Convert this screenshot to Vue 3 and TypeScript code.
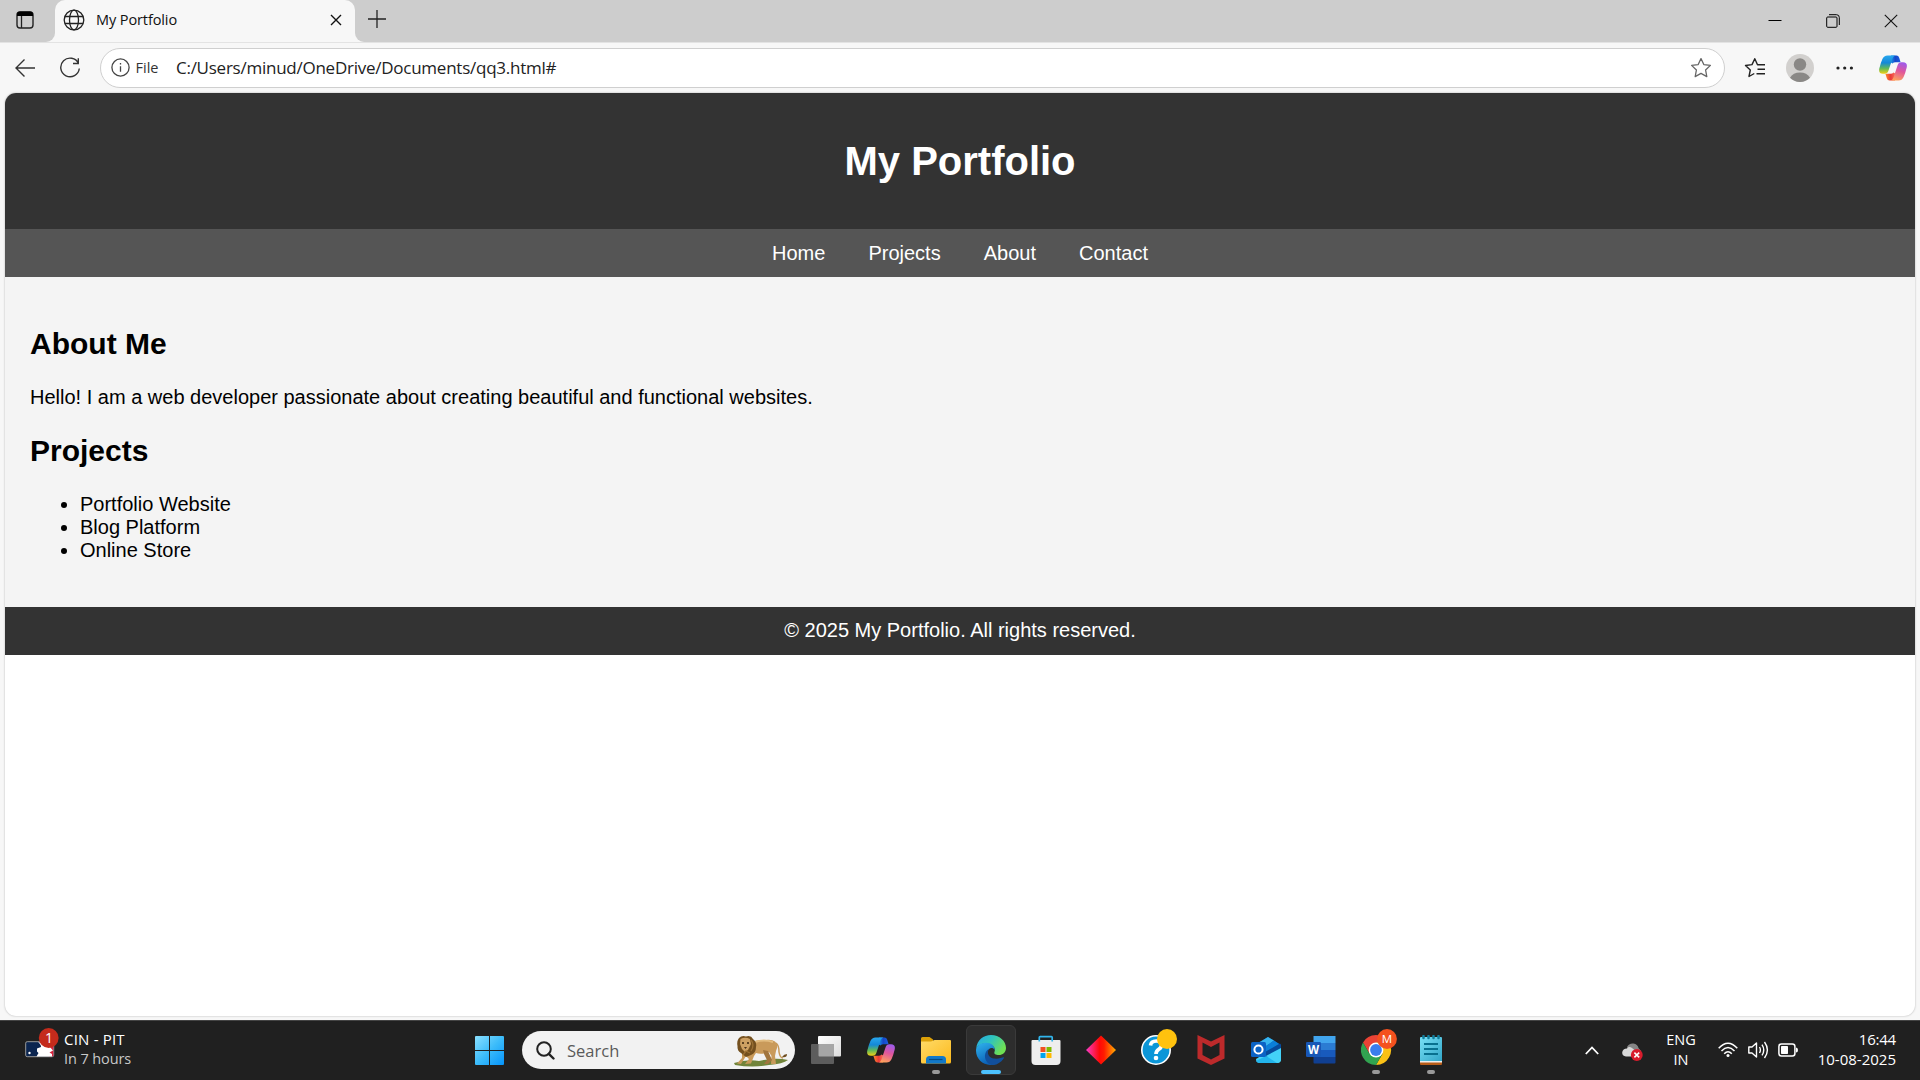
<script setup lang="ts">
import { ref } from 'vue'

interface TaskApp {
  id: string
  label: string
  running?: boolean
  active?: boolean
}

const address = ref('C:/Users/minud/OneDrive/Documents/qq3.html#')
const links: string[] = ['Home', 'Projects', 'About', 'Contact']
const projects: string[] = ['Portfolio Website', 'Blog Platform', 'Online Store']
const apps: TaskApp[] = [
  { id: 'taskview', label: 'Task view' },
  { id: 'copilot', label: 'Copilot' },
  { id: 'explorer', label: 'File Explorer', running: true },
  { id: 'edge', label: 'Edge', active: true },
  { id: 'store', label: 'Store' },
  { id: 'diamond', label: 'Diamond' },
  { id: 'help', label: 'Help' },
  { id: 'mcafee', label: 'McAfee' },
  { id: 'outlook', label: 'Outlook' },
  { id: 'word', label: 'Word' },
  { id: 'chrome', label: 'Chrome', running: true },
  { id: 'notepad', label: 'Notepad', running: true },
]
</script>

<template>
  <div class="screen">
    <svg class="defs" width="0" height="0" aria-hidden="true">
      <defs>
        <linearGradient id="cpA" x1="0" y1="0" x2="0" y2="1">
          <stop offset="0" stop-color="#28a8ee" /><stop offset=".4" stop-color="#1488d8" />
          <stop offset=".7" stop-color="#5fb95a" /><stop offset="1" stop-color="#f3d013" />
        </linearGradient>
        <linearGradient id="cpB" x1=".6" y1="0" x2=".3" y2="1">
          <stop offset="0" stop-color="#a05be8" /><stop offset=".45" stop-color="#e0569c" />
          <stop offset="1" stop-color="#ffa45a" />
        </linearGradient>
        <linearGradient id="cpC" x1="0" y1="0" x2="1" y2="0">
          <stop offset="0" stop-color="#1aa0ee" /><stop offset=".5" stop-color="#1647c8" /><stop offset="1" stop-color="#1d5fe0" />
        </linearGradient>
        <linearGradient id="cpD" x1="0" y1="0" x2="1" y2="0">
          <stop offset="0" stop-color="#ff8a2a" /><stop offset=".5" stop-color="#e93a3a" /><stop offset="1" stop-color="#ff7a5e" />
        </linearGradient>
        <symbol id="copilot" viewBox="0 0 28 26">
          <path d="M12 .5H17.500Q19.500.5 20.200 2.700L21.600 7.200H16.500Q14.500 7.200 13.500 8.500L11 7Z" fill="url(#cpC)" />
          <path d="M16 25.500H10.500Q8.500 25.500 7.800 23.300L6.400 18.800H11.500Q13.500 18.800 14.500 17.500L17 19Z" fill="url(#cpD)" />
          <path d="M8.500.5H16.500Q14.300 1 13.500 3.500L9.500 15.500Q8.500 18.800 5.600 18.800H4Q-.8 18.800.3 13.500Q1.600 8 3.400 4Q5 .5 8.500.5Z" fill="url(#cpA)" />
          <path d="M19.500 25.500H11.500Q13.700 25 14.500 22.500L18.500 10.500Q19.500 7.200 22.400 7.200H24Q28.800 7.200 27.700 12.500Q26.400 18 24.600 22Q23 25.500 19.500 25.500Z" fill="url(#cpB)" />
        </symbol>
      </defs>
    </svg>

    <div class="tabstrip">
      <div class="workspace">
        <svg width="18" height="20" viewBox="0 0 18 20"><rect x="1" y="2" width="16" height="16" rx="3" fill="none" stroke="#222" stroke-width="1.4" /><path d="M1 6V4.500Q1 1.500 4 1.500H14Q17 1.500 17 4.500V6Z" fill="#000" /><path d="M5.500 6V18" stroke="#222" stroke-width="1.3" /></svg>
      </div>
      <div class="tab">
        <svg class="globe" width="22" height="22" viewBox="0 0 22 22" fill="none" stroke="#222" stroke-width="1.300"><circle cx="11" cy="11" r="9.800" /><ellipse cx="11" cy="11" rx="4.500" ry="9.800" /><path d="M2 7.500H20M2 14.500H20" /></svg>
        <span class="tab-title">My Portfolio</span>
        <svg class="tab-close" width="12" height="12" viewBox="0 0 12 12" stroke="#111" stroke-width="1.400"><path d="M1 1 11 11M11 1 1 11" /></svg>
      </div>
      <svg class="newtab" width="18" height="18" viewBox="0 0 18 18" stroke="#222" stroke-width="1.300"><path d="M9 0V18M0 9H18" /></svg>
      <div class="window-controls">
        <svg width="14" height="14" viewBox="0 0 14 14"><path d="M.5 6.500H13.500" stroke="#000" stroke-width="1" /></svg>
        <svg width="14" height="14" viewBox="0 0 14 14" fill="none" stroke="#000" stroke-width="1"><rect x=".7" y="3" width="10.300" height="10.300" rx="1" /><path d="M3 .7H10.500Q13.300.7 13.300 3.500V11" /></svg>
        <svg width="14" height="14" viewBox="0 0 14 14" stroke="#111" stroke-width="1.100"><path d="M.8.8 13.200 13.200M13.200.8.8 13.200" /></svg>
      </div>
    </div>

    <div class="toolbar">
      <svg class="back" width="21" height="20" viewBox="0 0 21 20" fill="none" stroke="#333" stroke-width="1.400"><path d="M20 10H1.200M9.500 1.500 1 10 9.500 18.500" /></svg>
      <svg class="reload" width="22" height="22" viewBox="0 0 22 22" fill="none" stroke="#333" stroke-width="1.400"><path d="M19.500 6.500A9.300 9.300 0 1 0 20.300 11.500M19.300 1.200V6.500H14" /></svg>
      <div class="omnibox">
        <svg width="19" height="19" viewBox="0 0 19 19" fill="none" stroke="#444" stroke-width="1.300"><circle cx="9.500" cy="9.500" r="8.600" /><path d="M9.500 8.300V13.800M9.500 5V6.600" /></svg>
        <span class="scheme">File</span>
        <span class="address">{{ address }}</span>
        <svg class="star" width="22" height="22" viewBox="0 0 22 22" fill="none" stroke="#666" stroke-width="1.300" stroke-linejoin="round"><path d="M11 1.600 13.800 7.600 20.400 8.400 15.600 13 16.800 19.600 11 16.400 5.200 19.600 6.400 13 1.600 8.400 8.200 7.600Z" /></svg>
      </div>
      <svg class="favs" width="22" height="22" viewBox="0 0 22 22" fill="none" stroke="#222" stroke-width="1.400" stroke-linejoin="round"><path d="M17 7.800H13.500L10.800 1.700 8 7.600 1.500 8.500 6.300 13 5 19.500 10.300 16.500M15 7.800H21M13.500 12.300H21M12.500 16.800H21" /></svg>
      <svg class="profile" width="28" height="28" viewBox="0 0 28 28"><circle cx="14" cy="14" r="14" fill="#d2d0ce" /><circle cx="14" cy="10.500" r="6.200" fill="#8a8886" /><path d="M4 23.800Q7 18.500 14 18.500T24 23.800A14 14 0 0 1 4 23.800Z" fill="#8a8886" /></svg>
      <svg class="more" width="18" height="4" viewBox="0 0 18 4" fill="#222"><circle cx="2" cy="2" r="1.600" /><circle cx="8.700" cy="2" r="1.600" /><circle cx="15.400" cy="2" r="1.600" /></svg>
      <svg class="assist" width="28" height="26"><use href="#copilot" /></svg>
    </div>

    <div class="frame">
      <div class="page">
        <header><h1>My Portfolio</h1></header>
        <nav><a v-for="link in links" :key="link">{{ link }}</a></nav>
        <main>
          <h2>About Me</h2>
          <p>Hello! I am a web developer passionate about creating beautiful and functional websites.</p>
          <h2>Projects</h2>
          <ul><li v-for="project in projects" :key="project">{{ project }}</li></ul>
        </main>
        <footer>© 2025 My Portfolio. All rights reserved.</footer>
      </div>
    </div>

    <div class="taskbar">
      <div class="widget">
        <svg width="34" height="30" viewBox="0 0 34 30">
          <rect x=".7" y="13.700" width="28" height="15" rx="1.500" fill="#0b2550" stroke="#999" stroke-width="1" />
          <path d="M22 14H28.300V28.300H24Z" fill="#d8213b" />
          <path d="M13 14.500Q16 16 16 19L12 20.500V23.500L13.500 25 11.500 28.500H27V26L24.500 24.500 28 22.500 24 18 22 14Z" fill="#fff" />
          <circle cx="4.500" cy="25" r="1.200" fill="#fff" />
          <circle cx="23.700" cy="10" r="9.900" fill="#c42b1c" />
          <text x="24" y="15" text-anchor="middle" font-family="Open Sans, sans-serif" font-size="14" fill="#fff">1</text>
        </svg>
        <div class="widget-text"><span class="match">CIN - PIT</span><span class="when">In 7 hours</span></div>
      </div>

      <div class="start">
        <svg width="29" height="29" viewBox="0 0 29 29">
          <defs><linearGradient id="win" gradientUnits="userSpaceOnUse" x1="0" y1="0" x2="29" y2="29"><stop offset="0" stop-color="#8be0ff" /><stop offset=".5" stop-color="#3cbcfa" /><stop offset="1" stop-color="#0594fb" /></linearGradient></defs>
          <path d="M1 0H14V14H0V1Q0 0 1 0ZM15 0H28Q29 0 29 1V14H15ZM0 15H14V29H1Q0 29 0 28ZM15 15H29V28Q29 29 28 29H15Z" fill="url(#win)" />
        </svg>
      </div>

      <div class="search">
        <svg width="19" height="19" viewBox="0 0 19 19" fill="none" stroke="#222" stroke-width="2"><circle cx="8" cy="8" r="6.800" /><path d="M12.800 12.800 17.500 17.500" stroke-width="2.400" stroke-linecap="round" /></svg>
        <span>Search</span>
        <svg class="lion" width="56" height="32" viewBox="0 0 56 32">
          <path d="M1 28Q14 24 26 26 42 22 55 25 50 29 36 30 20 33 2 30Z" fill="#71843a" />
          <path d="M43 8Q46 10 46 17 47 23 50 23" fill="none" stroke="#c79a5b" stroke-width="1.500" />
          <path d="M49 22Q54 23 54 19 51 19 49 22Z" fill="#6f4d20" />
          <path d="M19 8Q24 4 30 5.500 38 3.500 42 6.500 46 10 43 16L42 21 43 29H38L38.500 21 36 17Q28 20 23 18L21 21 18 28.500 12 29 16 24 13 21 8 29 4 28.500 9 23V13Z" fill="#c99a5a" />
          <path d="M30 15 35 16 39 25 35 29H31L34 25 31 19Z" fill="#a1753e" />
          <path d="M22 7Q31 4 40 7" stroke="#e3bd80" stroke-width="2" fill="none" />
          <path d="M6 3Q9 0 13 1.500 18 0 20 4 24 7 23 12 23 18 18 20L13 22 8 18Q4 16 4.500 11Q3.500 6 6 3Z" fill="#74501f" />
          <path d="M7.500 4Q12 1.500 17 4L18 9 15 15 12 17 9 14 7 9Z" fill="#cda063" />
          <path d="M9 8H11M14 8H16" stroke="#39230c" stroke-width="1.300" />
          <path d="M11 12H14L12.500 14Z" fill="#49301c" />
          <path d="M10 20 13 16 17 18M18 5Q22 10 18 16" fill="none" stroke="#9b7034" stroke-width="1.300" />
        </svg>
      </div>

      <div class="apps">
        <div v-for="app in apps" :key="app.id" class="app" :class="{ running: app.running, active: app.active }" :aria-label="app.label">
          <svg v-if="app.id === 'taskview'" width="30" height="30" viewBox="0 0 30 30">
            <defs><linearGradient id="tvg" x1="0" y1="0" x2="1" y2="1"><stop offset="0" stop-color="#fff" /><stop offset="1" stop-color="#dcdcdc" /></linearGradient></defs>
            <rect x="7" y="1" width="23" height="20.500" rx="1" fill="url(#tvg)" />
            <rect x="0" y="9" width="23" height="20" rx="1" fill="#5d5d5d" />
            <path d="M7.500 9H23V21.500H8.500Q7.500 21.500 7.500 20.500Z" fill="#a6a6a6" />
          </svg>
          <svg v-else-if="app.id === 'copilot'" class="low" width="28" height="26"><use href="#copilot" /></svg>
          <svg v-else-if="app.id === 'explorer'" width="30" height="30" viewBox="0 0 30 30">
            <defs><linearGradient id="fld" x1="0" y1="0" x2="1" y2="1"><stop offset="0" stop-color="#ffdb68" /><stop offset="1" stop-color="#fcb91c" /></linearGradient></defs>
            <path d="M0 3.500Q0 2 1.500 2H8.500L12 4.500 12.500 7H0Z" fill="#dca008" />
            <path d="M0 6.500H10L13.500 5H29Q30 5 30 6V27Q30 28.500 28.500 28.500H1.500Q0 28.500 0 27Z" fill="url(#fld)" />
            <path d="M5 28.500V24.500Q5 21 8.500 21H21.500Q25 21 25 24.500V28.500Z" fill="#1279c9" /><path d="M8 24.500H21.500" stroke="#064b83" stroke-width="1.200" />
          </svg>
          <svg v-else-if="app.id === 'edge'" width="30" height="30" viewBox="0 0 30 30">
            <defs>
              <linearGradient id="egA" x1="0" y1="0" x2="1" y2=".5"><stop offset="0" stop-color="#27a8e8" /><stop offset=".5" stop-color="#2fc4bd" /><stop offset="1" stop-color="#6fe054" /></linearGradient>
              <linearGradient id="egB" x1="0" y1="0" x2=".4" y2="1"><stop offset="0" stop-color="#2fb4ee" /><stop offset="1" stop-color="#0c62b8" /></linearGradient>
            </defs>
            <path d="M.2 13.500C1 5 7.500 0 15 0 23.500 0 30 6 30 13 30 17.500 26.500 20 23 20 19.500 20 17.800 18.700 18.400 17.200 20.500 13 16 8.500 10 8.500 5 8.500 1.500 10.500.2 13.500Z" fill="url(#egA)" />
            <path d="M.1 14C1 10.500 5.500 7.500 10.500 7.800 15.500 8 19 11.200 18.600 15 17 12 12.500 12.500 11.500 17 10.500 22 14 28 19 29.300 8.500 32 0 25 0 15.500Z" fill="url(#egB)" />
            <path d="M13.500 13.400C10.500 16 11.500 23 18 23.500 22.500 24.200 26 22.200 27.500 22.200 28.200 22.200 28 23 27.500 23.700 24.500 28 19.500 30.500 15.500 30 8.500 28 6 17.500 13.500 13.400Z" fill="#114f9c" />
          </svg>
          <svg v-else-if="app.id === 'store'" width="30" height="30" viewBox="0 0 30 30">
            <path d="M.5 6Q.5 5 1.500 5H28.500Q29.500 5 29.500 6V26Q29.500 30 25.500 30H4.500Q.5 30 .5 26Z" fill="#eee" />
            <path d="M8.300 6.500V2.500Q8.300 1.700 9.100 1.700H20.400Q21.200 1.700 21.200 2.500V6.500" fill="none" stroke="#31b5ec" stroke-width="1.700" />
            <path d="M9.500 12H14.500V17H9.500Z" fill="#f25022" /><path d="M15.500 12H20.500V17H15.500Z" fill="#7fba00" /><path d="M9.500 18H14.500V23H9.500Z" fill="#00a4ef" /><path d="M15.500 18H20.500V23H15.500Z" fill="#ffb900" />
          </svg>
          <svg v-else-if="app.id === 'diamond'" width="30" height="30" viewBox="0 0 30 30">
            <defs><linearGradient id="dia"><stop offset="0" stop-color="#f83cc8" /><stop offset=".45" stop-color="#ff0808" /><stop offset=".6" stop-color="#ff1b00" /><stop offset="1" stop-color="#ffb000" /></linearGradient></defs>
            <path d="M15 .5 30 15 15 29.500 0 15Z" fill="url(#dia)" />
          </svg>
          <svg v-else-if="app.id === 'help'" class="tall" width="36" height="36" viewBox="0 0 36 36">
            <circle cx="15" cy="21" r="14.200" fill="#0b96d8" stroke="#fff" stroke-width="1.600" />
            <path d="M9.500 16.500Q10 12 15.300 12 20.500 12 20.500 16.200 20.500 18.500 17.800 20.300 15 22.200 15 25" fill="none" stroke="#fff" stroke-width="3.700" /><circle cx="15" cy="29" r="2.300" fill="#fff" />
            <circle cx="26" cy="10" r="10" fill="#ffc20e" />
          </svg>
          <svg v-else-if="app.id === 'mcafee'" width="28" height="30" viewBox="0 0 28 30"><path d="M.5 0 14 6.500 27.500 0V23.500L14 30 .5 23.500ZM5.500 7.500V20L14 24.500 22.500 20V7.500L14 12Z" fill="#bd2a2b" fill-rule="evenodd" /></svg>
          <svg v-else-if="app.id === 'outlook'" width="30" height="30" viewBox="0 0 30 30">
            <path d="M5 9 17 2 30 10 28 17H5Z" fill="#0a68bd" /><path d="M9 7 17 2 23 5.600 12 13Z" fill="#36b5ef" /><path d="M12 13 23 5.600 28 9 15 17Z" fill="#0b7fd8" />
            <path d="M30 10V24Q30 28 26 28H9Q5 28 5 24L13 19Z" fill="#43d2f8" /><path d="M14 17 29 8.500 30 10V16L15 23Z" fill="#064a9b" /><path d="M15 21 30 13V24Q30 28 26 28Z" fill="#43d2f8" />
            <path d="M5 26 15 21 26 28H9Q6 28 5 26Z" fill="#23b5ec" />
            <rect x="0" y="7" width="15" height="15" rx="1.500" fill="#0b63c5" />
            <circle cx="7.500" cy="14.500" r="4.100" fill="none" stroke="#fff" stroke-width="2" />
          </svg>
          <svg v-else-if="app.id === 'word'" width="30" height="30" viewBox="0 0 30 30">
            <path d="M7.500 1H29.500V8H7.500Z" fill="#41a5ee" /><path d="M7.500 8H29.500V15H7.500Z" fill="#2b7cd3" /><path d="M7.500 15H29.500V22H7.500Z" fill="#185abd" /><path d="M7.500 22H29.500V27.500Q29.500 28.500 28.500 28.500H8.500Q7.500 28.500 7.500 27.500Z" fill="#103f91" />
            <rect x="0" y="7" width="15" height="15" rx="1.200" fill="#1857b6" />
            <text x="7.500" y="18.600" text-anchor="middle" font-family="Open Sans, sans-serif" font-weight="700" font-size="11.500" fill="#fff">W</text>
          </svg>
          <svg v-else-if="app.id === 'chrome'" class="tall" width="36" height="36" viewBox="0 0 36 36">
            <path d="M2 13.500A15 15 0 0 1 28 13.500H15L8.500 24.700Z" fill="#ea4335" /><path d="M28 13.500A15 15 0 0 1 15 36L21.500 24.700 15 13.500Z" fill="#fbc116" /><path d="M2 13.500A15 15 0 0 0 15 36L21.500 24.700H8.500Z" fill="#31a350" />
            <circle cx="15" cy="21" r="7.400" fill="#fff" /><circle cx="15" cy="21" r="5.900" fill="#3b7ded" />
            <circle cx="26" cy="10" r="9.900" fill="#f4511e" /><text x="26" y="14.300" text-anchor="middle" font-family="Open Sans, sans-serif" font-size="11.500" fill="#fff">M</text>
          </svg>
          <svg v-else width="22" height="30" viewBox="0 0 22 30">
            <defs><linearGradient id="note" x1="0" y1="0" x2="1" y2="1"><stop offset="0" stop-color="#78e0f5" /><stop offset="1" stop-color="#32a6c8" /></linearGradient></defs>
            <rect x="0" y="25" width="22" height="5" rx="1" fill="#b85d19" /><rect x="0" y="24" width="22" height="3.500" fill="#eee" /><path d="M0 3Q0 2 1 2H21Q22 2 22 3V26H0Z" fill="url(#note)" />
            <path d="M3.500 1V3M8.500 1V3M13.500 1V3M18.500 1V3" stroke="#127d9b" stroke-width="2.500" stroke-linecap="round" /><path d="M4 9H18M4 14H18M4 19H18" stroke="#08708e" stroke-width="1.800" />
          </svg>
        </div>
      </div>

      <div class="tray">
        <svg class="chevron" width="14" height="9" viewBox="0 0 14 9" fill="none" stroke="#fff" stroke-width="1.800"><path d="M.8 8 7 1.500 13.200 8" /></svg>
        <svg class="cloud" width="21" height="18" viewBox="0 0 21 18"><path d="M5 4Q7 0 11.500.5 15.500 1 16.500 5L19 8V13H8Z" fill="#858585" /><path d="M4 13.500Q0 13 .2 9.300.8 5.500 5 5.500 7 3 10 5L15 9V13.500Z" fill="#d8d8d8" /><circle cx="14.800" cy="12" r="5.900" fill="#d91c2c" /><path d="M12.400 9.600 17.200 14.400M17.200 9.600 12.400 14.400" stroke="#fff" stroke-width="1.500" /></svg>
        <div class="lang"><span>ENG</span><span>IN</span></div>
        <svg class="wifi" width="20" height="16" viewBox="0 0 20 16" fill="none" stroke="#fff" stroke-width="1.500"><path d="M.7 6.200Q10-3.800 19.300 6.200M3.500 9Q10 2.200 16.500 9M6.200 11.700Q10 7.800 13.800 11.700" /><circle cx="10" cy="13.600" r="1.500" fill="#fff" stroke="none" /></svg>
        <svg class="volume" width="21" height="18" viewBox="0 0 21 18" fill="none" stroke="#fff" stroke-width="1.400" stroke-linejoin="round"><path d="M.8 6H4L8.500 2V16L4 12H.8ZM11.500 6Q13.300 9 11.500 12M14 3.600Q17.500 9 14 14.400M16.500 1Q22.300 9 16.500 17" /></svg>
        <svg class="battery" width="20" height="14" viewBox="0 0 20 14"><rect x=".9" y=".9" width="16" height="12.200" rx="2.500" fill="none" stroke="#fff" stroke-width="1.500" /><rect x="3" y="3" width="7" height="8" rx=".7" fill="#fff" /><path d="M18 4.500Q20 4.500 20 7T18 9.500Z" fill="#fff" /></svg>
        <div class="clock"><span class="time">16:44</span><span>10-08-2025</span></div>
      </div>
    </div>
  </div>
</template>

<style>
body { margin: 0; overflow: hidden; }
</style>

<style scoped>
.screen { width: 1920px; height: 1080px; display: flex; flex-direction: column; overflow: hidden; background: #f7f7f7; font-family: "Open Sans", "Noto Sans", sans-serif; color: #1b1b1b; }
.screen * { box-sizing: border-box; }
.screen svg { display: block; flex: none; }
.defs { position: absolute; }
.tabstrip { height: 42px; flex: none; display: flex; align-items: flex-start; background: #f7f7f7; }
.workspace { width: 55px; height: 42px; background: #cdcdcd; border-radius: 0 0 9px 0; padding: 10px 0 0 16px; }
.tab { width: 300px; height: 42px; display: flex; align-items: center; padding: 0 13px 3px 8px; background: linear-gradient(#cdcdcd, #cdcdcd) top / 100% 12px no-repeat; position: relative; z-index: 0; }
.tab::before { content: ""; position: absolute; inset: 0; border-radius: 10px 10px 0 0; background: #f7f7f7; z-index: -1; }
.tab-title { font-size: 14.5px; letter-spacing: -0.1px; margin-left: 11px; flex: 1; color: #111; }
.newtab { width: 45px; height: 42px; padding: 10px 14px 14px 13px; background: #cdcdcd; border-radius: 0 0 0 9px; }
.window-controls { flex: 1; height: 42px; display: flex; justify-content: flex-end; gap: 44px; padding: 14px 22px 0 0; background: #cdcdcd; }
.toolbar { height: 51px; flex: none; display: flex; align-items: center; border-top: 1px solid #e3e3e3; padding: 0 12px 1px 15px; }
.reload { margin-left: 23px; }
.omnibox { width: 1625px; height: 40px; margin-left: 19px; display: flex; align-items: center; border: 1px solid #cfcfcf; border-radius: 20px; background: #fff; padding: 0 12px 0 10px; }
.scheme { font-size: 14.5px; margin-left: 5.5px; color: #333; }
.address { font-size: 17px; margin-left: 17.5px; flex: 1; color: #222; letter-spacing: -0.25px; }
.scheme, .address { padding-bottom: 1px; }
.favs { margin-left: 19px; }
.profile { margin-left: 20px; }
.more { margin-left: 22px; }
.assist { margin-left: 25px; }
.frame { height: 927px; flex: none; padding: 0 5px 4px; }
.page { height: 923px; overflow: hidden; border-radius: 11px; background: #fff; box-shadow: 0 0 2px #aaa; color: #000; font: 20px/23px "Liberation Sans", Arial, sans-serif; }
header { height: 136px; display: flex; align-items: center; justify-content: center; background: #333; color: #fff; }
h1 { margin: 0; font-size: 40px; line-height: 46px; }
nav { height: 48px; display: flex; align-items: center; justify-content: center; gap: 43.06px; background: #555; color: #fff; }
main { height: 330px; padding: 25px; background: #f4f4f4; display: flow-root; }
h2 { font-size: 30px; line-height: 34px; margin: 24.9px 0; }
p { margin: 20px 0; }
ul { margin: 20px 0; padding-left: 50px; }
footer { height: 48px; padding: 12px; text-align: center; background: #333; color: #fff; }
.taskbar { height: 60px; flex: none; display: flex; align-items: center; background: #202020; border-top: 1px solid #444; padding-bottom: 1px; color: #fff; }
.widget { width: 461px; display: flex; align-items: flex-start; padding-left: 25px; height: 52px; }
.widget > svg { margin-top: 4px; }
.widget-text, .lang, .clock { display: flex; flex-direction: column; font-size: 14.5px; line-height: 20px; }
.widget-text { margin: 5px 0 0 5px; }
.match { font-size: 15px; letter-spacing: 0.2px; }
.when { letter-spacing: -0.1px; color: #c8c8c8; }
.start { width: 61px; padding-left: 14px; }
.search { width: 273px; height: 38px; border-radius: 19px; background: #f2f2f2; display: flex; align-items: center; padding: 0 6px 0 14px; color: #5a5a5a; font-size: 16.5px; }
.search span { margin-left: 12px; flex: 1; }
.lion { margin-top: 2px; }
.apps { display: flex; margin-left: 3px; }
.app { width: 55px; height: 50px; display: flex; align-items: flex-start; justify-content: center; padding-top: 10px; position: relative; }
.app .low { margin-top: 2px; }
.app .tall { margin: -6px -6px 0 0; }
.app.active::before { content: ""; position: absolute; inset: 0 2.500px; border: 1px solid #3a3a3a; border-radius: 6px; background: #2d2d2d; }
.app > svg { position: relative; }
.app.running::after, .app.active::after { content: ""; position: absolute; bottom: 1px; width: 8px; height: 4px; border-radius: 2px; background: #999; }
.app.active::after { width: 20px; background: #4cc2ff; }
.tray { flex: 1; display: flex; align-items: center; justify-content: flex-end; padding-right: 24px; }
.cloud { margin: 4px 0 0 23px; }
.lang { align-items: center; width: 30px; margin-left: 23px; }
.wifi { margin-left: 22px; }
.volume { margin-left: 10px; }
.battery { margin-left: 9px; }
.clock { width: 78px; align-items: flex-end; margin-left: 20px; padding-bottom: 2px; white-space: nowrap; font-size: 15px; }
.time { letter-spacing: -0.2px; }
</style>
